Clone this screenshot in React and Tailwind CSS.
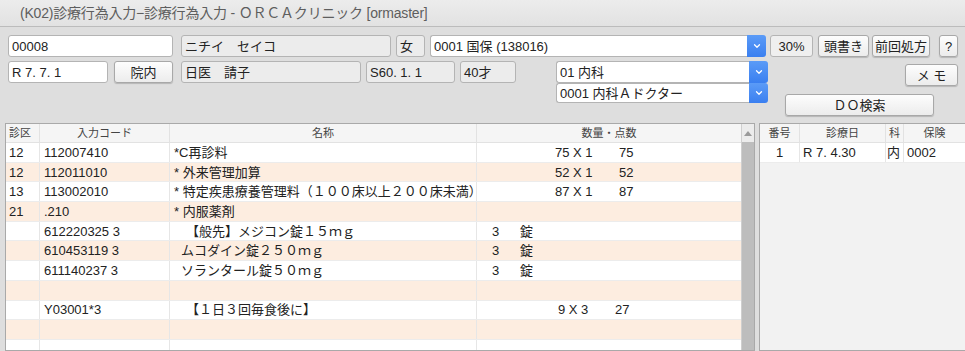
import { ChevronDown } from "lucide-react";

const font = "font-['Liberation_Sans','Noto_Sans_CJK_JP',sans-serif]";

const field = "h-[22px] shrink-0 flex items-center px-[3px] rounded-[3px] border border-[#b4b4b4] text-[13px] text-[#222] leading-none";
const input = `${field} bg-white`;
const readonly = `${field} bg-[#ececec]`;
const button =
  "h-[22px] shrink-0 flex items-center justify-center rounded-[3px] border border-[#a8a8a8] bg-gradient-to-b from-[#fdfdfd] to-[#ececec] shadow-[0_1px_1px_rgba(0,0,0,0.18)] text-[13px] text-[#222] leading-none";

function Combo({ text, className = "" }) {
  return (
    <div className={`flex shrink-0 ${className}`}>
      <div className="flex flex-1 items-center rounded-l-[3px] border border-r-0 border-[#b4b4b4] bg-white px-[3px] text-[13px] leading-none text-[#222]">
        {text}
      </div>
      <div className="flex w-[19px] items-center justify-center rounded-r-[3px] bg-gradient-to-b from-[#5b9bf7] to-[#3a7ff0]">
        <ChevronDown size={10} strokeWidth={3} color="white" />
      </div>
    </div>
  );
}

const rows = [
  { ku: "12", code: "112007410", name: "*C再診料", pts: ["75 X 1", "75"] },
  { ku: "12", code: "112011010", name: "* 外来管理加算", pts: ["52 X 1", "52"] },
  { ku: "13", code: "113002010", name: "* 特定疾患療養管理料（１００床以上２００床未満）", pts: ["87 X 1", "87"] },
  { ku: "21", code: ".210", name: "* 内服薬剤" },
  { code: "612220325 3", name: "【般先】メジコン錠１５ｍｇ", qty: "3", pad: "pl-[16px]" },
  { code: "610453119 3", name: "ムコダイン錠２５０ｍｇ", qty: "3", pad: "pl-[11px]" },
  { code: "611140237 3", name: "ソランタール錠５０ｍｇ", qty: "3", pad: "pl-[11px]" },
  {},
  { code: "Y03001*3", name: "【１日３回毎食後に】", pts: ["9 X 3", "27"], narrow: true, pad: "pl-[16px]" },
  {},
  {},
];

function Qty({ row }) {
  if (row.pts) {
    return (
      <div className={`flex ${row.narrow ? "pl-[81px]" : "pl-[78px]"}`}>
        <span className={row.narrow ? "w-[57px]" : "w-[64px]"}>{row.pts[0]}</span>
        <span>{row.pts[1]}</span>
      </div>
    );
  }
  if (row.qty) {
    return (
      <div className="flex pl-[15px]">
        <span className="w-[28px]">{row.qty}</span>
        <span>錠</span>
      </div>
    );
  }
  return null;
}

export default function App() {
  return (
    <div className={`${font} h-[351px] w-[965px] overflow-hidden bg-[#dedede]`}>
      <div className="flex h-[27px] items-center border-b border-[#bcbcbc] bg-gradient-to-b from-[#ececec] to-[#e2e2e2] pl-[20px] text-[14px] tracking-[-0.2px] text-[#5e5e5e]">
        (K02)診療行為入力−診療行為入力 - ＯＲＣＡクリニック [ormaster]
      </div>

      <div className="flex pl-[8px] pt-[8px]">
        <div className={`${input} w-[165px]`}>00008</div>
        <div className={`${readonly} ml-[8px] w-[210px]`}>ニチイ　セイコ</div>
        <div className={`${readonly} ml-[5px] w-[29px]`}>女</div>
        <Combo text="0001 国保 (138016)" className="ml-[5px] h-[22px] w-[336px]" />
        <div className={`${field} ml-[4px] w-[43px] justify-center bg-[#efefef]`}>30%</div>
        <div className={`${button} ml-[5px] w-[51px]`}>頭書き</div>
        <div className={`${button} ml-[3px] w-[58px]`}>前回処方</div>
        <div className={`${button} ml-[9px] w-[19px]`}>?</div>
      </div>

      <div className="flex h-[66px] pl-[8px] pt-[4px]">
        <div className="flex items-start">
          <div className={`${input} w-[100px]`}>R 7. 7. 1</div>
          <div className={`${button} ml-[6px] w-[59px]`}>院内</div>
          <div className={`${readonly} ml-[8px] w-[180px]`}>日医　請子</div>
          <div className={`${readonly} ml-[5px] w-[89px]`}>S60. 1. 1</div>
          <div className={`${readonly} ml-[5px] w-[56px]`}>40才</div>
        </div>
        <div className="ml-[40px] flex w-[212px] flex-col">
          <Combo text="01 内科" className="h-[22px]" />
          <Combo text="0001 内科Ａドクター" className="h-[20px]" />
        </div>
        <div className="flex flex-1 flex-col items-end pr-[7px]">
          <div className={`${button} mt-[3px] w-[53px]`}>メ モ</div>
          <div className={`${button} mr-[24px] mt-[8px] w-[149px]`}>ＤＯ検索</div>
        </div>
      </div>

      <div className="flex h-[228px] pl-[5px]">
        <div className="flex w-[750px] border border-[#a9a9a9] bg-white">
          <div className="flex-1 overflow-hidden text-[13px] text-[#222]">
            <div className="flex h-[19px] items-center border-b border-[#e2e2e2] bg-[#f5f5f5] text-[11px] text-[#444]">
              <div className="w-[33px] pl-[3px]">診区</div>
              <div className="flex h-full w-[130px] items-center justify-center border-l border-[#e2e2e2]">入力コード</div>
              <div className="flex h-full w-[307px] items-center justify-center border-l border-[#e2e2e2]">名称</div>
              <div className="flex h-full flex-1 items-center justify-center border-l border-[#e2e2e2]">数量・点数</div>
            </div>
            {rows.map((r, i) => (
              <div
                key={i}
                className={`flex h-[19.7px] items-center border-b border-[#ececec] leading-none ${i % 2 === 1 ? "bg-[#fdede0]" : "bg-white"}`}
              >
                <div className="w-[33px] pl-[3px]">{r.ku}</div>
                <div className="flex h-full w-[130px] items-center border-l border-[#e6e6e6] pl-[4px]">{r.code}</div>
                <div className={`flex h-full w-[307px] items-center border-l border-[#e6e6e6] ${r.pad || "pl-[4px]"}`}>
                  {r.name}
                </div>
                <div className="flex h-full flex-1 items-center border-l border-[#e6e6e6]">
                  <Qty row={r} />
                </div>
              </div>
            ))}
          </div>
          <div className="flex w-[13px] flex-col border-l border-[#cfcfcf] bg-[#ececec]">
            <div className="flex h-[18px] items-center justify-center">
              <div className="h-0 w-0 border-x-[4px] border-b-[5px] border-x-transparent border-b-[#9a9a9a]" />
            </div>
            <div className="flex-1 bg-[#bdbdbd]" />
          </div>
        </div>
        <div className="ml-[4px] flex-1 border border-r-0 border-[#a9a9a9] bg-[#f2f2f2] text-[13px] text-[#222]">
          <div className="flex h-[19px] items-center border-b border-[#e2e2e2] bg-[#f5f5f5] text-[11px] text-[#444]">
            <div className="w-[39px] text-center">番号</div>
            <div className="flex h-full w-[86px] items-center justify-center border-l border-[#e2e2e2]">診療日</div>
            <div className="flex h-full w-[18px] items-center justify-center border-l border-[#e2e2e2]">科</div>
            <div className="flex h-full flex-1 items-center justify-center border-l border-[#e2e2e2]">保険</div>
          </div>
          <div className="flex h-[19.7px] items-center border-b border-[#ececec] bg-white leading-none">
            <div className="w-[39px] text-center">1</div>
            <div className="flex h-full w-[86px] items-center border-l border-[#e6e6e6] pl-[3px]">R 7. 4.30</div>
            <div className="flex h-full w-[18px] items-center border-l border-[#e6e6e6] pl-[1px]">内</div>
            <div className="flex h-full flex-1 items-center border-l border-[#e6e6e6] pl-[3px]">0002</div>
          </div>
        </div>
      </div>
    </div>
  );
}
